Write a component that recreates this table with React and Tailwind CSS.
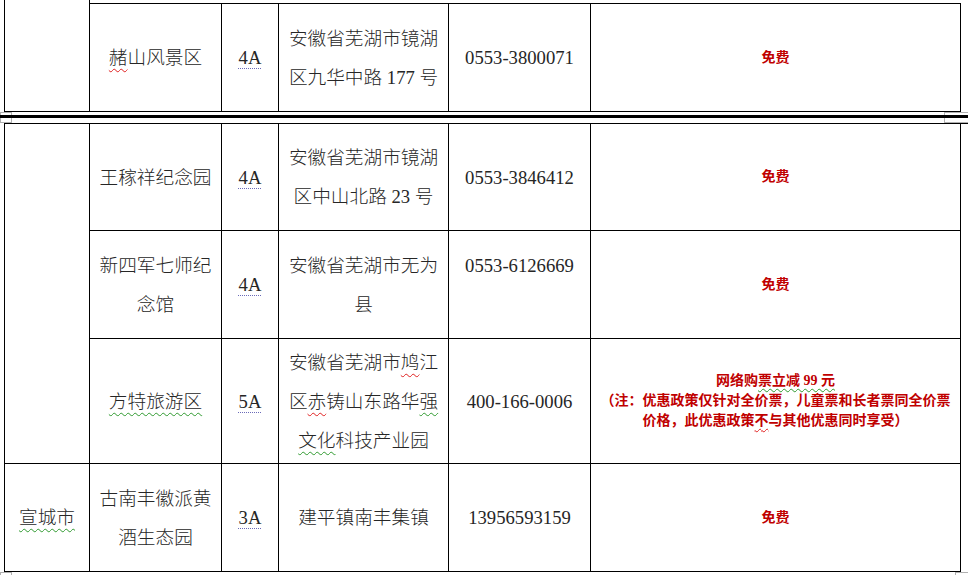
import React from 'react';

const red = 'underline decoration-wavy decoration-[#e02020] decoration-1 underline-offset-[4px]';
const green = 'underline decoration-wavy decoration-[#2f9a2f] decoration-1 underline-offset-[4px]';
const dotted = 'underline decoration-dotted decoration-[#6a6ab8] decoration-1 underline-offset-[4px]';

const Cell = ({ children, className = '' }) => (
  <div className={`flex flex-col items-center justify-center text-center border-r border-b border-black leading-[39px] ${className}`}>
    {children}
  </div>
);

const Free = () => <span className="text-[#c00000] font-bold text-[14px] leading-[20px]">免费</span>;

const Grade = ({ v }) => <span className={dotted}>{v}</span>;

const Handle = ({ className }) => (
  <div className={`absolute border border-[#b0b0b0] bg-white ${className}`} />
);

export default function App() {
  return (
    <div className="relative w-[968px] h-[575px] bg-white overflow-hidden text-[18.67px] font-light text-[#262626] font-['Liberation_Serif','Noto_Sans_CJK_SC',serif]">
      {/* upper table (continues from previous page) */}
      <div className="ml-[4px] grid grid-cols-[85px_132px_57px_170px_142px_370px] grid-rows-[112px] border-l border-black">
        <div className="border-r border-b border-black" />
        <Cell className="mt-[3px] border-t">
          <span>
            <span className={red}>赭</span>山风景区
          </span>
        </Cell>
        <Cell className="mt-[3px] border-t">
          <Grade v="4A" />
        </Cell>
        <Cell className="mt-[3px] border-t">
          <span>安徽省芜湖市镜湖</span>
          <span>区九华中路 177 号</span>
        </Cell>
        <Cell className="mt-[3px] border-t">0553-3800071</Cell>
        <Cell className="mt-[3px] border-t">
          <Free />
        </Cell>
      </div>

      <div className="h-[3px]" />
      <div className="relative z-10 h-[3px] bg-black" />
      <div className="h-[5px]" />

      {/* lower table */}
      <div className="ml-[4px] grid grid-cols-[85px_132px_57px_170px_142px_370px] grid-rows-[107px_108px_125px_108px] border-l border-t border-black">
        <div className="row-span-3 border-r border-b border-black" />

        <Cell>王稼祥纪念园</Cell>
        <Cell>
          <Grade v="4A" />
        </Cell>
        <Cell>
          <span>安徽省芜湖市镜湖</span>
          <span>区中山北路 23 号</span>
        </Cell>
        <Cell>0553-3846412</Cell>
        <Cell>
          <Free />
        </Cell>

        <Cell>
          <span>新四军七师纪</span>
          <span>念馆</span>
        </Cell>
        <Cell>
          <Grade v="4A" />
        </Cell>
        <Cell>
          <span>安徽省芜湖市无为</span>
          <span>县</span>
        </Cell>
        <Cell>
          <span>0553-6126669</span>
          <span>&nbsp;</span>
        </Cell>
        <Cell>
          <Free />
        </Cell>

        <Cell>
          <span className={green}>方特旅游区</span>
        </Cell>
        <Cell>
          <Grade v="5A" />
        </Cell>
        <Cell>
          <span>
            安徽省芜湖市<span className={red}>鸠</span>江
          </span>
          <span>
            区<span className={red}>赤</span>铸山东路华<span className={green}>强</span>
          </span>
          <span>
            <span className={green}>文化</span>科技产业园
          </span>
        </Cell>
        <Cell>400-166-0006</Cell>
        <Cell>
          <div className="flex flex-col items-center text-[#c00000] font-bold text-[14px] leading-[20px] whitespace-nowrap">
            <span>
              网络购<span className="underline decoration-wavy decoration-[#2f9a2f] decoration-1 underline-offset-[3px]">票立减 99 元</span>
            </span>
            <span>（注：优惠政策仅针对全价票，儿童票和长者票同全价票</span>
            <span>
              价格，此优惠政策<span className="underline decoration-wavy decoration-[#e02020] decoration-1 underline-offset-[3px]">不</span>与其他优惠同时享受）
            </span>
          </div>
        </Cell>

        <Cell>
          <span className={green}>宣城市</span>
        </Cell>
        <Cell>
          <span>古南丰徽派黄</span>
          <span>酒生态园</span>
        </Cell>
        <Cell>
          <Grade v="3A" />
        </Cell>
        <Cell>建平镇南丰集镇</Cell>
        <Cell>13956593159</Cell>
        <Cell>
          <Free />
        </Cell>
      </div>

      <Handle className="left-0 top-[112px] w-[12px] h-[11px]" />
      <Handle className="left-[944px] top-[112px] w-[26px] h-[11px]" />
      <Handle className="left-0 top-[572px] w-[12px] h-[10px]" />
      <Handle className="left-[955px] top-[572px] w-[16px] h-[10px]" />
    </div>
  );
}
